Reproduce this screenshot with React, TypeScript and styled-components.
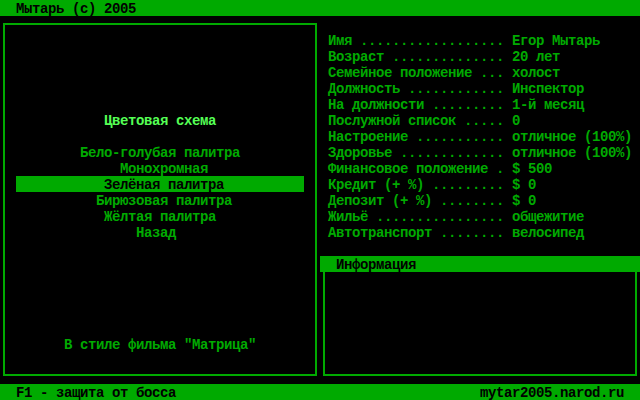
import React from "react";
import styled, { createGlobalStyle } from "styled-components";

const GREEN = "#00aa00";
const BRIGHT = "#55ff55";

const GlobalStyle = createGlobalStyle`
	html, body { margin: 0; padding: 0; background: #000; }
`;

const stats: [string, string][] = [
	["Имя", "Егор Мытарь"],
	["Возраст", "20 лет"],
	["Семейное положение", "холост"],
	["Должность", "Инспектор"],
	["На должности", "1-й месяц"],
	["Послужной список", "0"],
	["Настроение", "отличное (100%)"],
	["Здоровье", "отличное (100%)"],
	["Финансовое положение", "$ 500"],
	["Кредит (+ %)", "$ 0"],
	["Депозит (+ %)", "$ 0"],
	["Жильё", "общежитие"],
	["Автотранспорт", "велосипед"],
];

// column (in 8px cells) where each entry starts on screen
const menu = [
	{ text: "Бело-голубая палитра", col: 10 },
	{ text: "Монохромная", col: 15 },
	{ text: "Зелёная палитра", col: 13, active: true },
	{ text: "Бирюзовая палитра", col: 12 },
	{ text: "Жёлтая палитра", col: 13 },
	{ text: "Назад", col: 17 },
];

const dotted = (label: string, value: string) =>
	`${label} ${".".repeat(Math.max(1, 21 - label.length))} ${value}`;

const App = (): JSX.Element => {
	return (
		<>
			<GlobalStyle />
			<Screen>
				<Bar>
					<span>Мытарь (c) 2005</span>
				</Bar>
				<Main>
					<LeftPanel>
						<Box>
							<Line $col={13} $bright>Цветовая схема</Line>
							<Menu>
								{menu.map((m) => (
									<Line key={m.text} $col={m.col} $active={m.active}>
										{m.text}
									</Line>
								))}
							</Menu>
							<Footer $col={8}>В стиле фильма "Матрица"</Footer>
						</Box>
					</LeftPanel>
					<RightPanel>
						<Stats>
							{stats.map(([k, v]) => (
								<Row key={k}>{dotted(k, v)}</Row>
							))}
						</Stats>
						<InfoBar>Информация</InfoBar>
						<InfoBox />
					</RightPanel>
				</Main>
				<Bar>
					<span>F1 - защита от босса</span>
					<span>mytar2005.narod.ru</span>
				</Bar>
			</Screen>
		</>
	);
};

export default App;

const Screen = styled.div`
	width: 640px;
	height: 400px;
	display: flex;
	flex-direction: column;
	background: #000;
	color: ${GREEN};
	font-family: "Liberation Mono", "DejaVu Sans Mono", monospace;
	font-size: 14px;
	font-weight: bold;
	letter-spacing: -0.4px;
	line-height: 16px;
	white-space: pre;
	overflow: hidden;
`;

const Bar = styled.div`
	height: 16px;
	flex: none;
	display: flex;
	justify-content: space-between;
	padding: 0 16px;
	background: ${GREEN};
	color: #000;
	span {
		display: block;
		height: 16px;
		padding-top: 1px;
		box-sizing: border-box;
	}
`;

const Main = styled.div`
	flex: 1;
	display: flex;
	min-height: 0;
`;

const LeftPanel = styled.section`
	width: 320px;
	box-sizing: border-box;
	padding: 7px 3px 8px;
	display: flex;
`;

const Box = styled.div`
	flex: 1;
	display: flex;
	flex-direction: column;
	border: 2px solid ${GREEN};
	padding: 87px 11px 22px;
`;

const Line = styled.div<{ $col: number; $bright?: boolean; $active?: boolean }>`
	height: 16px;
	box-sizing: border-box;
	padding: 1px 0 0 ${(p) => (p.$col - 2) * 8}px;
	color: ${(p) => (p.$active ? "#000" : p.$bright ? BRIGHT : GREEN)};
	background: ${(p) => (p.$active ? GREEN : "transparent")};
`;

const Menu = styled.div`
	margin-top: 16px;
	display: flex;
	flex-direction: column;
`;

const Footer = styled(Line)`
	margin-top: auto;
`;

const RightPanel = styled.section`
	width: 320px;
	display: flex;
	flex-direction: column;
`;

const Stats = styled.div`
	padding: 16px 0 0 8px;
	display: flex;
	flex-direction: column;
`;

const Row = styled.div`
	height: 16px;
	box-sizing: border-box;
	padding-top: 1px;
`;

const InfoBar = styled.div`
	margin-top: 16px;
	height: 16px;
	box-sizing: border-box;
	padding: 1px 0 0 16px;
	background: ${GREEN};
	color: #000;
`;

const InfoBox = styled.div`
	flex: 1;
	margin: 0 3px 8px;
	border: 2px solid ${GREEN};
	border-top: none;
`;
